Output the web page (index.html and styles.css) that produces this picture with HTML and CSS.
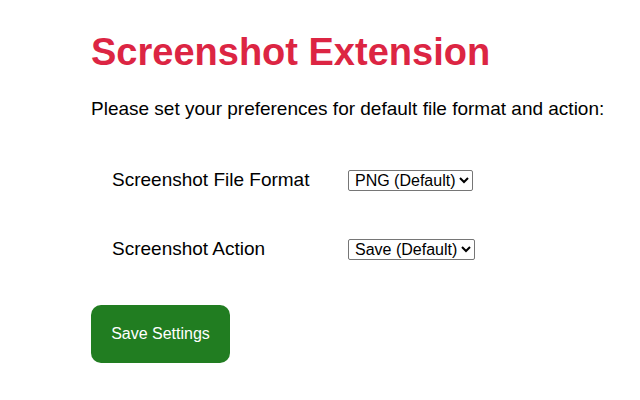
FILE: index.html
```html
<!DOCTYPE html>
<html>
<head>
<meta charset="utf-8">
<link rel="stylesheet" href="styles.css">
</head>
<body>
<div class="page">
  <h1 class="title">Screenshot Extension</h1>
  <p class="intro">Please set your preferences for default file format and action:</p>
  <div class="settings">
    <div class="row">
      <label class="label" for="fmt">Screenshot File Format</label>
      <select class="select" id="fmt">
        <option>PNG (Default)</option>
        <option>JPEG</option>
      </select>
    </div>
    <div class="row">
      <label class="label" for="act">Screenshot Action</label>
      <select class="select" id="act">
        <option>Save (Default)</option>
        <option>Copy</option>
      </select>
    </div>
  </div>
  <button class="save">Save Settings</button>
</div>
</body>
</html>
```

FILE: styles.css
```css
html, body {
  margin: 0;
  padding: 0;
  background: #ffffff;
}
body {
  font-family: "Liberation Sans", Arial, sans-serif;
  color: #000000;
}
.page {
  padding: 30px 0 0 91px;
}
.title {
  margin: 0;
  font-size: 38px;
  font-weight: bold;
  color: #dc2543;
  line-height: 44px;
}
.intro {
  margin: 24px 0 0 0;
  font-size: 19px;
  line-height: 22px;
}
.settings {
  margin-top: 49px;
  padding-left: 21px;
  display: flex;
  flex-direction: column;
  gap: 47px;
}
.row {
  display: flex;
  align-items: center;
  height: 22px;
}
.label {
  width: 236px;
  font-size: 19px;
  line-height: 22px;
}
.select {
  font-family: "Liberation Sans", Arial, sans-serif;
  font-size: 16px;
  height: 21px;
  padding: 0 0 0 2px;
  border: 1px solid #767676;
  border-radius: 2px;
  background: #fff;
  color: #000;
}
.save {
  margin-top: 45px;
  width: 139px;
  height: 58px;
  border: none;
  border-radius: 10px;
  background: #217d21;
  color: #ffffff;
  font-family: "Liberation Sans", Arial, sans-serif;
  font-size: 16px;
  padding: 0;
}
```
